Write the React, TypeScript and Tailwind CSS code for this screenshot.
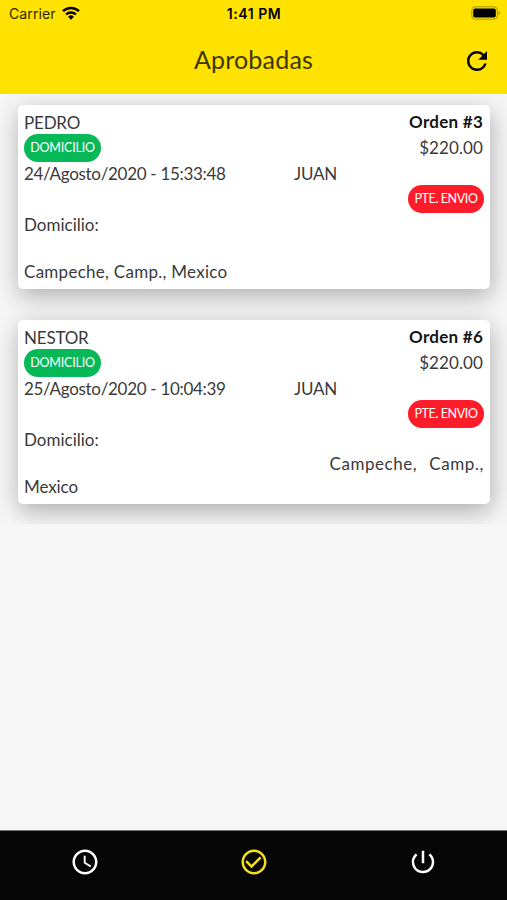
import { ReactNode } from "react"
import { MdAccessTime, MdCheckCircleOutline, MdPowerSettingsNew, MdRefresh } from "react-icons/md"

type Order = {
  id: number
  client: string
  date: string
  seller: string
  total: string
  address: ReactNode
}

const orders: Order[] = [
  {
    id: 3,
    client: "PEDRO",
    date: "24/Agosto/2020 - 15:33:48",
    seller: "JUAN",
    total: "$220.00",
    address: (
      <>
        <p className="h-[23px]" />
        <p>Campeche, Camp., Mexico</p>
      </>
    ),
  },
  {
    id: 6,
    client: "NESTOR",
    date: "25/Agosto/2020 - 10:04:39",
    seller: "JUAN",
    total: "$220.00",
    address: (
      <>
        <p className="flex justify-end gap-[12px]">
          <span className="tracking-[0.55px]">Campeche,</span>
          <span className="tracking-[0.6px]">Camp.,</span>
        </p>
        <p className="tracking-[-0.1px]">Mexico</p>
      </>
    ),
  },
]

function StatusBar() {
  return (
    <div className="flex h-7 items-center justify-between pl-[9px] pr-[6px] font-['Inter',sans-serif] text-[14px] text-[#2b2600]">
      <div className="flex w-[140px] items-center gap-[6px]">
        <span className="-mt-0.5 tracking-[0.1px]">Carrier</span>
        <svg width="18" height="14" viewBox="0 0 18 14" className="-mt-0.5">
          <path d="M1 5.2a11.6 11.6 0 0 1 16 0" fill="none" stroke="#000" strokeWidth="2.5" />
          <path d="M4 8.5a7.2 7.2 0 0 1 10 0" fill="none" stroke="#000" strokeWidth="2.3" />
          <path d="M9 13.7 6.1 10.8a4.1 4.1 0 0 1 5.8 0z" fill="#000" />
        </svg>
      </div>
      <span className="-ml-0.5 -mt-0.5 text-[14px] font-semibold tracking-[0.55px] text-black">1:41 PM</span>
      <div className="flex w-[140px] justify-end">
        <svg width="30" height="14" viewBox="0 0 30 14" className="-mt-0.5">
          <rect x="0.8" y="0.8" width="25.6" height="12.4" rx="3.4" fill="none" stroke="#a69500" />
          <rect x="2.2" y="2.4" width="22.6" height="9.2" rx="1.8" fill="#000" />
          <path d="M27.6 4.8v4.4c1.9-.8 1.9-3.6 0-4.4z" fill="#a69500" />
        </svg>
      </div>
    </div>
  )
}

function Header() {
  return (
    <header className="h-[94px] shrink-0 bg-[#ffe200]">
      <StatusBar />
      <div className="grid h-[66px] grid-cols-[1fr_auto_1fr] items-center px-[15px] pb-[1px]">
        <h1 className="col-start-2 pb-[1px] text-[25px] tracking-[0.2px] text-[#3d3600]">Aprobadas</h1>
        <MdRefresh className="size-[30px] justify-self-end text-black" />
      </div>
    </header>
  )
}

function Badge({ className, children }: { className: string; children: ReactNode }) {
  return (
    <span
      className={`flex h-7 shrink-0 items-center justify-center rounded-full pt-[1px] text-[12.5px] text-white ${className}`}
    >
      {children}
    </span>
  )
}

function OrderCard({ order }: { order: Order }) {
  return (
    <article className="h-[184px] rounded-[5px] bg-white pl-1.5 pr-[7px] pt-[5px] shadow-[1px_7px_24px_rgba(0,0,0,0.3)]">
      <div className="flex h-[25px] items-center justify-between">
        <span className="tracking-[-0.2px]">{order.client}</span>
        <span className="-mt-px font-bold tracking-[0.25px] text-[#151515]">Orden #{order.id}</span>
      </div>
      <div className="flex h-[26px] items-center justify-between">
        <Badge className="w-[77px] bg-[#06b857] tracking-[-0.2px]">DOMICILIO</Badge>
        <span className="tracking-[0.1px]">{order.total}</span>
      </div>
      <div className="flex h-[26px] items-center">
        <span className="w-[270px] tracking-[-0.3px]">{order.date}</span>
        <span className="tracking-[-0.2px]">{order.seller}</span>
      </div>
      <div className="-mr-px flex h-[25px] items-center justify-end pb-[1px]">
        <Badge className="w-[76px] bg-[#ff1c2a] tracking-[-0.4px]">PTE. ENVIO</Badge>
      </div>
      <div className="flex h-[26px] items-center">Domicilio:</div>
      <div className="-mr-px -mt-px leading-[23px] tracking-[0.27px]">{order.address}</div>
    </article>
  )
}

function TabBar() {
  return (
    <nav className="grid h-[70px] shrink-0 grid-cols-3 justify-items-center border-t border-[#777] bg-[#050505] pt-4 text-white">
      <MdAccessTime className="size-[30px]" />
      <MdCheckCircleOutline className="size-[30px] text-[#f5e01f]" />
      <MdPowerSettingsNew className="size-[30px]" />
    </nav>
  )
}

export default function App() {
  return (
    <div className="flex h-[900px] w-[507px] flex-col overflow-hidden bg-[#f6f6f6] font-['Lato',sans-serif] text-[17px] text-[#3a3a3a]">
      <Header />
      <main className="flex-1">
        <div className="flex h-[430px] flex-col gap-[31px] overflow-hidden pl-[18px] pr-[17px] pt-[11px]">
          {orders.map((order) => (
            <OrderCard key={order.id} order={order} />
          ))}
        </div>
      </main>
      <TabBar />
    </div>
  )
}
